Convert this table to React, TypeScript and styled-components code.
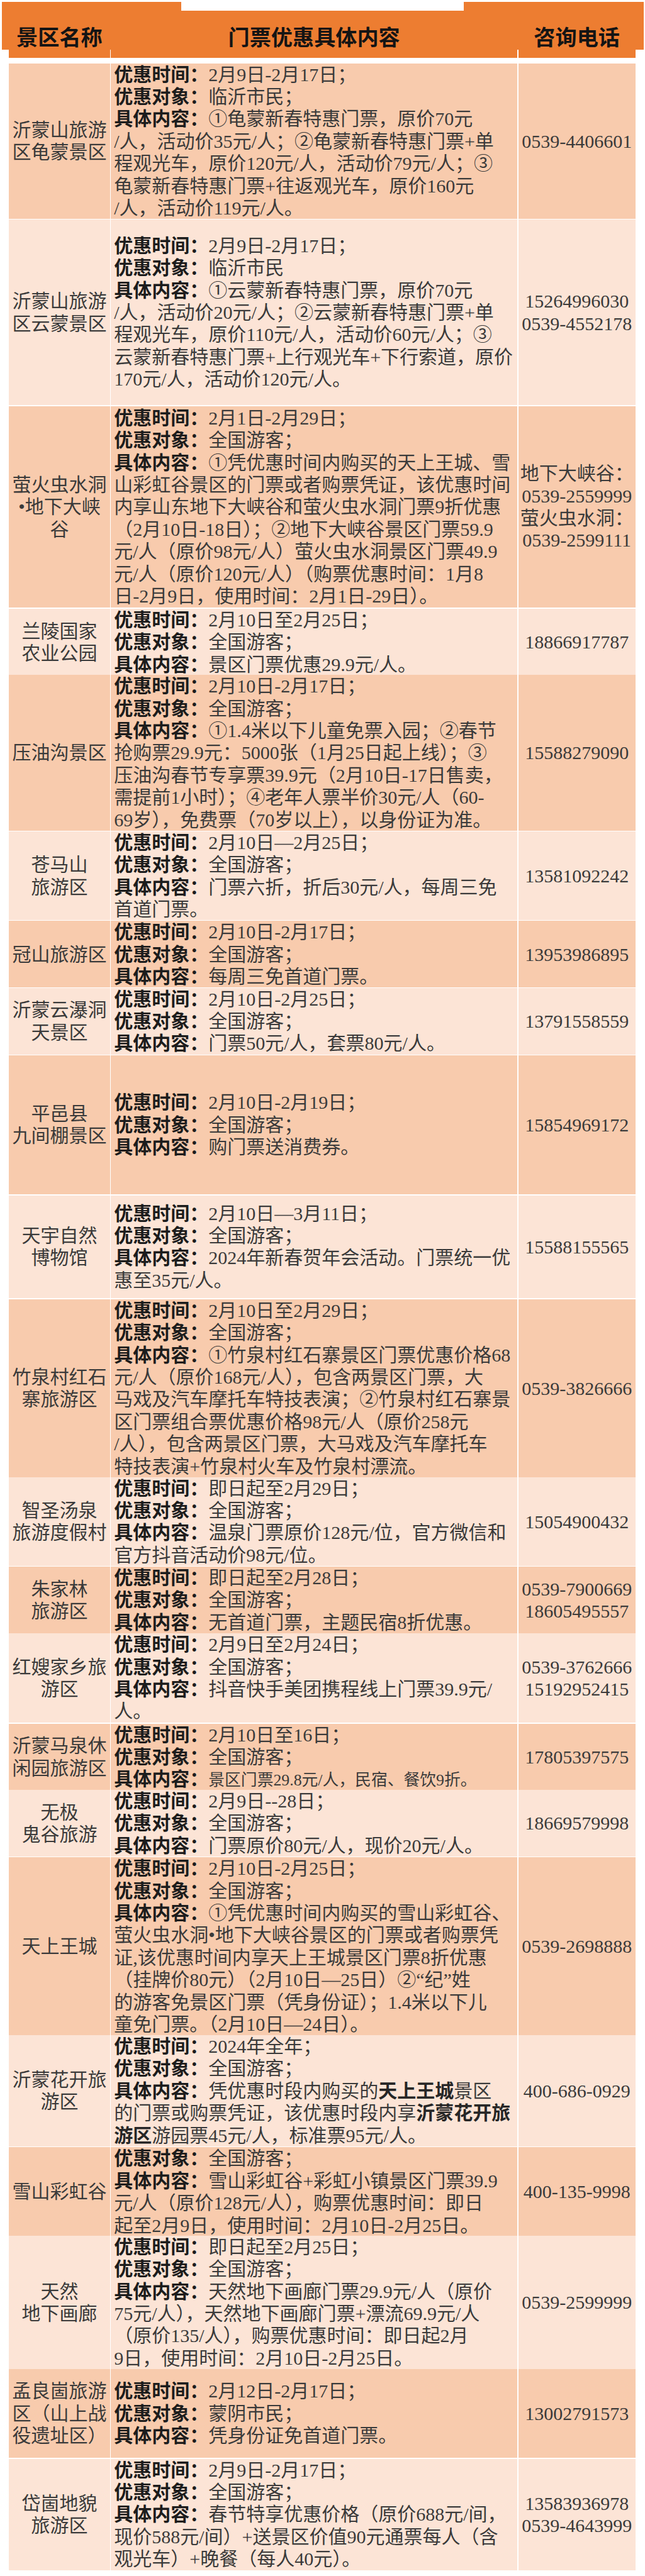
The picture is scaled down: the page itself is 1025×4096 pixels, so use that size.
import * as React from 'react';
import styled, { createGlobalStyle } from 'styled-components';

const S = 0.949;
const px = (v: number) => `${(v * S).toFixed(2)}px`;

const ORANGE = '#ED7D31';
const TONES = { dark: '#F8CBAD', light: '#FCE4D6' };
const COLS = `${px(169)} ${px(680)} ${px(196)}`;
const FONT = '"Liberation Serif", "Noto Sans CJK SC", serif';

const GlobalStyle = createGlobalStyle`
  html, body {
    margin: 0;
    padding: 0;
    background: #fff;
  }
  body {
    font-family: ${FONT};
  }
`;

const Page = styled.div`
  width: 1025px;
  min-height: 4096px;
  background: #fff;
`;

const HeaderArea = styled.div`
  position: relative;
  height: ${px(97)};
`;

const Notch = styled.div`
  position: absolute;
  top: 0;
  left: ${px(303)};
  width: ${px(474)};
  height: ${px(15)};
  background: #fff;
`;

const HeaderBand = styled.div`
  margin: ${px(3)} 0 0 ${px(3)};
  width: ${px(1075)};
  height: ${px(80)};
  box-sizing: border-box;
  padding: 0 0 ${px(2)} ${px(12)};
  background: ${ORANGE};
  display: grid;
  grid-template-columns: ${COLS};
  column-gap: ${px(2)};
  align-items: end;
`;

const HeaderLabel = styled.div`
  font-family: "Noto Sans CJK SC", sans-serif;
  font-size: ${px(36)};
  line-height: ${px(40)};
  font-weight: 700;
  color: #141414;
  text-align: center;
  white-space: nowrap;
`;

const HeaderFoot = styled.div`
  margin-left: ${px(15)};
  height: ${px(14)};
  display: grid;
  grid-template-columns: ${COLS};
  column-gap: ${px(2)};

  & > div {
    background: ${ORANGE};
  }
`;

const Table = styled.div`
  margin: ${px(6)} 0 0 ${px(15)};
  display: flex;
  flex-direction: column;
  gap: 2px;
`;

const Row = styled.div<{ $h: number }>`
  height: ${(p) => p.$h}px;
  display: grid;
  grid-template-columns: ${COLS};
  column-gap: ${px(2)};
`;

const Cell = styled.div<{ $tone: 'dark' | 'light' }>`
  background: ${(p) => TONES[p.$tone]};
  display: flex;
  flex-direction: column;
  justify-content: center;
  font-family: ${FONT};
  font-size: 30px;
  line-height: ${px(37.3)};
  color: #3a3a3a;
  min-width: 0;
`;

const NameCell = styled(Cell)`
  align-items: center;
  text-align: center;
`;

const DetailCell = styled(Cell)`
  align-items: flex-start;
  padding-left: ${px(5)};
`;

const PhoneCell = styled(Cell)`
  align-items: center;
  text-align: center;
`;

const Line = styled.div`
  white-space: nowrap;
  height: ${px(37.3)};
`;

const Label = styled.span`
  font-weight: 700;
  color: #1c1c1c;
`;

const Bold = styled.span`
  font-weight: 700;
  color: #262626;
`;

const Small = styled.span`
  font-size: 0.86em;
`;

type Entry = { top: number; name: string[]; detail: string[]; phone: string[] };

const rows: Entry[] = [
  {
    top: 103,
    name: ['沂蒙山旅游', '区龟蒙景区'],
    detail: [
      '优惠时间：2月9日-2月17日；',
      '优惠对象：临沂市民；',
      '具体内容：①龟蒙新春特惠门票，原价70元',
      '/人，活动价35元/人；②龟蒙新春特惠门票+单',
      '程观光车，原价120元/人，活动价79元/人；③',
      '龟蒙新春特惠门票+往返观光车，原价160元',
      '/人，活动价119元/人。',
    ],
    phone: ['0539-4406601'],
  },
  {
    top: 365,
    name: ['沂蒙山旅游', '区云蒙景区'],
    detail: [
      '优惠时间：2月9日-2月17日；',
      '优惠对象：临沂市民',
      '具体内容：①云蒙新春特惠门票，原价70元',
      '/人，活动价20元/人；②云蒙新春特惠门票+单',
      '程观光车，原价110元/人，活动价60元/人；③',
      '云蒙新春特惠门票+上行观光车+下行索道，原价',
      '170元/人，活动价120元/人。',
    ],
    phone: ['15264996030', '0539-4552178'],
  },
  {
    top: 678,
    name: ['萤火虫水洞', '•地下大峡', '谷'],
    detail: [
      '优惠时间：2月1日-2月29日；',
      '优惠对象：全国游客；',
      '具体内容：①凭优惠时间内购买的天上王城、雪',
      '山彩虹谷景区的门票或者购票凭证，该优惠时间',
      '内享山东地下大峡谷和萤火虫水洞门票9折优惠',
      '（2月10日-18日）；②地下大峡谷景区门票59.9',
      '元/人（原价98元/人）萤火虫水洞景区门票49.9',
      '元/人（原价120元/人）（购票优惠时间：1月8',
      '日-2月9日，使用时间：2月1日-29日）。',
    ],
    phone: ['地下大峡谷：', '0539-2559999', '萤火虫水洞：', '0539-2599111'],
  },
  {
    top: 1017,
    name: ['兰陵国家', '农业公园'],
    detail: ['优惠时间：2月10日至2月25日；', '优惠对象：全国游客；', '具体内容：景区门票优惠29.9元/人。'],
    phone: ['18866917787'],
  },
  {
    top: 1128,
    name: ['压油沟景区'],
    detail: [
      '优惠时间：2月10日-2月17日；',
      '优惠对象：全国游客；',
      '具体内容：①1.4米以下儿童免票入园；②春节',
      '抢购票29.9元：5000张（1月25日起上线）；③',
      '压油沟春节专享票39.9元（2月10日-17日售卖，',
      '需提前1小时）；④老年人票半价30元/人（60-',
      '69岁），免费票（70岁以上），以身份证为准。',
    ],
    phone: ['15588279090'],
  },
  {
    top: 1390,
    name: ['苍马山', '旅游区'],
    detail: [
      '优惠时间：2月10日—2月25日；',
      '优惠对象：全国游客；',
      '具体内容：门票六折，折后30元/人，每周三免',
      '首道门票。',
    ],
    phone: ['13581092242'],
  },
  {
    top: 1540,
    name: ['冠山旅游区'],
    detail: ['优惠时间：2月10日-2月17日；', '优惠对象：全国游客；', '具体内容：每周三免首道门票。'],
    phone: ['13953986895'],
  },
  {
    top: 1652,
    name: ['沂蒙云瀑洞', '天景区'],
    detail: ['优惠时间：2月10日-2月25日；', '优惠对象：全国游客；', '具体内容：门票50元/人，套票80元/人。'],
    phone: ['13791558559'],
  },
  {
    top: 1765,
    name: ['平邑县', '九间棚景区'],
    detail: ['优惠时间：2月10日-2月19日；', '优惠对象：全国游客；', '具体内容：购门票送消费券。'],
    phone: ['15854969172'],
  },
  {
    top: 2000,
    name: ['天宇自然', '博物馆'],
    detail: [
      '优惠时间：2月10日—3月11日；',
      '优惠对象：全国游客；',
      '具体内容：2024年新春贺年会活动。门票统一优',
      '惠至35元/人。',
    ],
    phone: ['15588155565'],
  },
  {
    top: 2174,
    name: ['竹泉村红石', '寨旅游区'],
    detail: [
      '优惠时间：2月10日至2月29日；',
      '优惠对象：全国游客；',
      '具体内容：①竹泉村红石寨景区门票优惠价格68',
      '元/人（原价168元/人），包含两景区门票，大',
      '马戏及汽车摩托车特技表演；②竹泉村红石寨景',
      '区门票组合票优惠价格98元/人（原价258元',
      '/人），包含两景区门票，大马戏及汽车摩托车',
      '特技表演+竹泉村火车及竹泉村漂流。',
    ],
    phone: ['0539-3826666'],
  },
  {
    top: 2472,
    name: ['智圣汤泉', '旅游度假村'],
    detail: [
      '优惠时间：即日起至2月29日；',
      '优惠对象：全国游客；',
      '具体内容：温泉门票原价128元/位，官方微信和',
      '官方抖音活动价98元/位。',
    ],
    phone: ['15054900432'],
  },
  {
    top: 2622,
    name: ['朱家林', '旅游区'],
    detail: ['优惠时间：即日起至2月28日；', '优惠对象：全国游客；', '具体内容：无首道门票，主题民宿8折优惠。'],
    phone: ['0539-7900669', '18605495557'],
  },
  {
    top: 2734,
    name: ['红嫂家乡旅', '游区'],
    detail: [
      '优惠时间：2月9日至2月24日；',
      '优惠对象：全国游客；',
      '具体内容：抖音快手美团携程线上门票39.9元/',
      '人。',
    ],
    phone: ['0539-3762666', '15192952415'],
  },
  {
    top: 2885,
    name: ['沂蒙马泉休', '闲园旅游区'],
    detail: ['优惠时间：2月10日至16日；', '优惠对象：全国游客；', '具体内容：^^景区门票29.8元/人，民宿、餐饮9折。^^'],
    phone: ['17805397575'],
  },
  {
    top: 2996,
    name: ['无极', '鬼谷旅游'],
    detail: ['优惠时间：2月9日--28日；', '优惠对象：全国游客；', '具体内容：门票原价80元/人，现价20元/人。'],
    phone: ['18669579998'],
  },
  {
    top: 3109,
    name: ['天上王城'],
    detail: [
      '优惠时间：2月10日-2月25日；',
      '优惠对象：全国游客；',
      '具体内容：①凭优惠时间内购买的雪山彩虹谷、',
      '萤火虫水洞•地下大峡谷景区的门票或者购票凭',
      '证,该优惠时间内享天上王城景区门票8折优惠',
      '（挂牌价80元）（2月10日—25日）②“纪”姓',
      '的游客免景区门票（凭身份证）；1.4米以下儿',
      '童免门票。（2月10日—24日）。',
    ],
    phone: ['0539-2698888'],
  },
  {
    top: 3407,
    name: ['沂蒙花开旅', '游区'],
    detail: [
      '优惠时间：2024年全年；',
      '优惠对象：全国游客；',
      '具体内容：凭优惠时段内购买的**天上王城**景区',
      '的门票或购票凭证，该优惠时段内享**沂蒙花开旅**',
      '**游区**游园票45元/人，标准票95元/人。',
    ],
    phone: ['400-686-0929'],
  },
  {
    top: 3595,
    name: ['雪山彩虹谷'],
    detail: [
      '优惠对象：全国游客；',
      '具体内容：雪山彩虹谷+彩虹小镇景区门票39.9',
      '元/人（原价128元/人），购票优惠时间：即日',
      '起至2月9日，使用时间：2月10日-2月25日。',
    ],
    phone: ['400-135-9998'],
  },
  {
    top: 3743,
    name: ['天然', '地下画廊'],
    detail: [
      '优惠时间：即日起至2月25日；',
      '优惠对象：全国游客；',
      '具体内容：天然地下画廊门票29.9元/人（原价',
      '75元/人），天然地下画廊门票+漂流69.9元/人',
      '（原价135/人），购票优惠时间：即日起2月',
      '9日，使用时间：2月10日-2月25日。',
    ],
    phone: ['0539-2599999'],
  },
  {
    top: 3967,
    name: ['孟良崮旅游', '区（山上战', '役遗址区）'],
    detail: ['优惠时间：2月12日-2月17日；', '优惠对象：蒙阴市民；', '具体内容：凭身份证免首道门票。'],
    phone: ['13002791573'],
  },
  {
    top: 4117,
    name: ['岱崮地貌', '旅游区'],
    detail: [
      '优惠时间：2月9日-2月17日；',
      '优惠对象：全国游客；',
      '具体内容：春节特享优惠价格（原价688元/间，',
      '现价588元/间）+送景区价值90元通票每人（含',
      '观光车）+晚餐（每人40元）。',
    ],
    phone: ['13583936978', '0539-4643999'],
  },
];

const END = 4303;

function renderText(text: string): React.ReactNode[] {
  return text
    .split(/(\*\*[^*]+\*\*|\^\^[^^]+\^\^)/)
    .filter(Boolean)
    .map((part, i) => {
      if (part.startsWith('**')) return <Bold key={i}>{part.slice(2, -2)}</Bold>;
      if (part.startsWith('^^')) return <Small key={i}>{part.slice(2, -2)}</Small>;
      return <React.Fragment key={i}>{part}</React.Fragment>;
    });
}

function DetailLine({ text }: { text: string }): JSX.Element {
  const m = text.match(/^(优惠时间：|优惠对象：|具体内容：)(.*)$/);
  if (!m) return <Line>{renderText(text)}</Line>;
  return (
    <Line>
      <Label>{m[1]}</Label>
      {renderText(m[2])}
    </Line>
  );
}

function App(): JSX.Element {
  return (
    <Page>
      <GlobalStyle />
      <HeaderArea>
        <HeaderBand>
          <HeaderLabel>景区名称</HeaderLabel>
          <HeaderLabel>门票优惠具体内容</HeaderLabel>
          <HeaderLabel>咨询电话</HeaderLabel>
        </HeaderBand>
        <HeaderFoot>
          <div />
          <div />
          <div />
        </HeaderFoot>
        <Notch />
      </HeaderArea>

      <Table>
        {rows.map((row, i) => {
          const next = i + 1 < rows.length ? rows[i + 1].top : END;
          const h = (next - row.top) * S - 2;
          const tone = i % 2 === 0 ? 'dark' : 'light';
          return (
            <Row key={row.top} $h={h}>
              <NameCell $tone={tone}>
                {row.name.map((n) => (
                  <Line key={n}>{n}</Line>
                ))}
              </NameCell>
              <DetailCell $tone={tone}>
                {row.detail.map((d, j) => (
                  <DetailLine key={j} text={d} />
                ))}
              </DetailCell>
              <PhoneCell $tone={tone}>
                {row.phone.map((p) => (
                  <Line key={p}>{p}</Line>
                ))}
              </PhoneCell>
            </Row>
          );
        })}
      </Table>
    </Page>
  );
}

export default App;
